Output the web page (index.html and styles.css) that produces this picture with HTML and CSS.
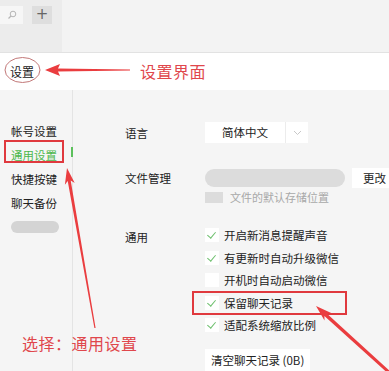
FILE: index.html
```html
<!DOCTYPE html>
<html lang="zh-CN">
  <head>
    <meta charset="UTF-8" />
    <meta name="viewport" content="width=device-width, initial-scale=1.0" />
    <title>设置</title>
    <link rel="stylesheet" href="styles.css">
  </head>

  <body>
    <header class="titlebar">
      <div class="tb-left">
        <div class="search">
          <svg width="10" height="10" viewBox="0 0 10 10">
            <circle cx="6" cy="4" r="2.8" fill="none" stroke="#b5b5b5" stroke-width="1" />
            <line x1="4" y1="6" x2="1.5" y2="8.5" stroke="#b5b5b5" stroke-width="1.2" />
          </svg>
        </div>
        <div class="plus">+</div>
      </div>
      <div class="tb-right"></div>
    </header>

    <div class="head"><span class="head-title">设置</span></div>

    <div class="settings">
      <nav class="side">
        <a>帐号设置</a>
        <a class="valgt">通用设置</a>
        <a>快捷按键</a>
        <a>聊天备份</a>
        <span class="blur-pill"></span>
      </nav>

      <main class="main">
        <div class="row lang">
          <div class="label">语言</div>
          <div class="select">
            <span class="select-text">简体中文</span>
            <span class="select-arrow">
              <svg width="9" height="6" viewBox="0 0 9 6">
                <polyline points="1,1 4.5,4.5 8,1" fill="none" stroke="#c8c8c8" stroke-width="1" />
              </svg>
            </span>
          </div>
        </div>

        <div class="row file">
          <div class="label">文件管理</div>
          <div class="ctrl">
            <div class="path-line">
              <span class="blur-bar"></span>
              <button class="btn">更改</button>
            </div>
            <div class="hint"><span class="blur-small"></span>文件的默认存储位置</div>
          </div>
        </div>

        <div class="row general">
          <div class="label">通用</div>
          <div class="checks">
            <label class="check"><span class="box on"></span>开启新消息提醒声音</label>
            <label class="check"><span class="box on"></span>有更新时自动升级微信</label>
            <label class="check"><span class="box"></span>开机时自动启动微信</label>
            <label class="check"><span class="box on"></span>保留聊天记录</label>
            <label class="check"><span class="box on"></span>适配系统缩放比例</label>
            <button class="btn clear">清空聊天记录 (0B)</button>
          </div>
        </div>
      </main>
    </div>

    <!-- annotations -->
    <div class="note note-top">设置界面</div>
    <div class="note note-bottom">选择：通用设置</div>
    <svg class="marks" width="389" height="371" viewBox="0 0 389 371">
      <ellipse cx="22.5" cy="70" rx="17.5" ry="12.5" fill="none" stroke="#c27878" stroke-width="1" />
      <rect x="5" y="141" width="58" height="21" fill="none" stroke="#e0393e" stroke-width="2" />
      <rect x="193" y="292" width="153" height="22" fill="none" stroke="#e0393e" stroke-width="2" />
      <polygon fill="#ea3d3f" points="45,70 60,64 58,68.5 130,69.6 130,70.4 58,71.5 60,76" />
      <polygon fill="#ea3d3f" points="67,168 74.7,182.9 70.7,180.5 95.6,327.9 94.4,328.1 67.7,181.1 64.9,184.7" />
      <polygon fill="#ea3d3f" points="316,306 331.2,313.1 326.8,313.4 393,373.9 391,376.1 324.4,316 324.5,320.5" />
    </svg>
  </body>
</html>
```

FILE: styles.css
```css
* {
  box-sizing: border-box;
}

body {
  margin: 0;
  width: 389px;
  height: 371px;
  overflow: hidden;
  position: relative;
  font-family: "Noto Sans CJK SC", "Noto Sans", sans-serif;
  color: #222;
  background: #f5f5f5;
}

.titlebar {
  display: flex;
  height: 53px;
  border-bottom: 1px solid #e2e2e2;
}

.tb-left {
  width: 62px;
  background: #ececec;
  display: flex;
  align-items: flex-start;
  gap: 9px;
  padding-top: 6px;
}

.search {
  width: 23px;
  height: 18px;
  background: #f6f6f6;
  display: flex;
  align-items: center;
  justify-content: flex-end;
  padding-right: 6px;
}

.plus {
  width: 20px;
  height: 18px;
  background: #dedede;
  color: #666;
  font-family: "DejaVu Sans", sans-serif;
  font-size: 15px;
  line-height: 17px;
  text-align: center;
}

.tb-right {
  flex: 1;
  background: #f3f3f3;
}

.head {
  height: 37px;
  background: #fff;
  display: flex;
  align-items: center;
  padding-left: 10px;
}

.head-title {
  font-size: 12px;
}

.settings {
  display: flex;
  height: 281px;
}

.side {
  width: 73px;
  flex-shrink: 0;
  border-right: 1px solid #e4e4e4;
  display: flex;
  flex-direction: column;
  padding-top: 29px;
  padding-left: 11px;
  position: relative;
}

.side a {
  height: 24px;
  font-size: 11.5px;
  line-height: 24px;
  color: #222;
}

.side a.valgt {
  color: #4cb84c;
}

.side a.valgt::after {
  content: "";
  position: absolute;
  right: -1px;
  top: 57px;
  width: 2px;
  height: 10px;
  background: #5cc05c;
}

.blur-pill {
  margin-top: 6px;
  width: 48px;
  height: 12px;
  border-radius: 6px;
  background: #d4d4d4;
}

.main {
  flex: 1;
  min-width: 0;
  padding: 32px 0 0 52px;
}

.row {
  display: flex;
}

.label {
  width: 80px;
  font-size: 11.5px;
  flex-shrink: 0;
}

.lang {
  height: 21px;
  align-items: center;
}

.select {
  width: 103px;
  height: 21px;
  background: #fff;
  display: flex;
  align-items: center;
}

.select-text {
  width: 81px;
  text-align: center;
  font-size: 11.5px;
  border-right: 1px solid #ececec;
  line-height: 21px;
}

.select-arrow {
  flex: 1;
  display: flex;
  justify-content: center;
}

.file {
  margin-top: 25px;
}

.file .label {
  line-height: 20px;
}

.ctrl {
  flex: 1;
  min-width: 0;
}

.path-line {
  display: flex;
  align-items: center;
  gap: 7px;
}

.blur-bar {
  width: 140px;
  height: 18px;
  flex-shrink: 0;
  border-radius: 9px;
  background: #dcdcdc;
}

.btn {
  border: none;
  background: #fff;
  font-family: "Noto Sans CJK SC", "Noto Sans", sans-serif;
  font-size: 11.5px;
  color: #222;
  padding: 0;
  height: 20px;
  width: 40px;
  flex-shrink: 0;
  text-align: left;
  padding-left: 11px;
}

.hint {
  margin-top: 3px;
  display: flex;
  align-items: center;
  font-size: 11px;
  color: #a8a8a8;
  height: 12px;
}

.blur-small {
  width: 18px;
  height: 11px;
  background: #dcdcdc;
  margin-right: 7px;
}

.general {
  margin-top: 21px;
}

.general .label {
  line-height: 26px;
}

.checks {
  display: flex;
  flex-direction: column;
}

.check {
  height: 22.5px;
  display: flex;
  align-items: center;
  gap: 5px;
  font-size: 11.5px;
}

.box {
  width: 14px;
  height: 14px;
  background: #fff;
  position: relative;
}

.box.on::after {
  content: "";
  position: absolute;
  left: 4px;
  top: 2px;
  width: 4px;
  height: 7px;
  border-right: 1.2px solid #6dbf6d;
  border-bottom: 1.2px solid #6dbf6d;
  transform: rotate(40deg);
}

.btn.clear {
  margin-top: 12px;
  width: 105px;
  height: 22px;
  padding-left: 6px;
}

.note {
  position: absolute;
  color: #e0474c;
  font-size: 16px;
  letter-spacing: 0.5px;
}

.note-top {
  left: 140px;
  top: 59px;
}

.note-bottom {
  left: 22px;
  top: 331px;
}

.marks {
  position: absolute;
  left: 0;
  top: 0;
  pointer-events: none;
}
```
